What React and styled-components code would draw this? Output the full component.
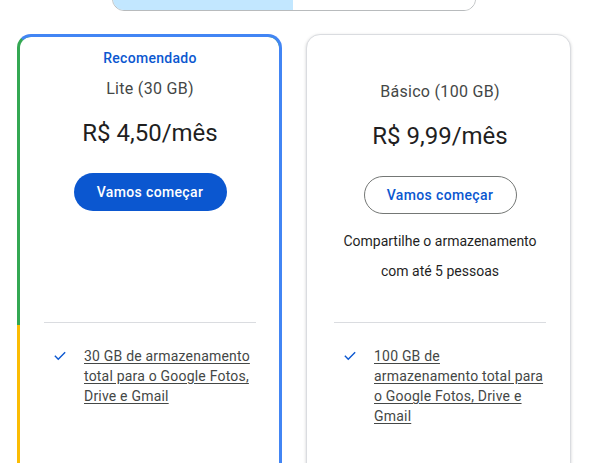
import React from "react";
import styled, { createGlobalStyle } from "styled-components";

const plans = [
  {
    id: "lite",
    recommended: true,
    name: "Lite (30 GB)",
    price: "R$ 4,50/mês",
    feature: "30 GB de armazenamento total para o Google Fotos, Drive e Gmail",
  },
  {
    id: "basic",
    recommended: false,
    name: "Básico (100 GB)",
    price: "R$ 9,99/mês",
    share: ["Compartilhe o armazenamento", "com até 5 pessoas"],
    feature: "100 GB de armazenamento total para o Google Fotos, Drive e Gmail",
  },
];

const Check = () => (
  <svg width="14" height="14" viewBox="0 0 24 24" fill="none">
    <path d="M4 12.5l5 5L20 6.5" stroke="#0b57d0" strokeWidth="2.4" strokeLinecap="square" />
  </svg>
);

const App = () => {
  return (
    <Page>
      <GlobalStyle />
      <Toggle>
        <Segment $active>Mensal</Segment>
        <Segment>
          Anual · Economize até <Save>16%</Save>
        </Segment>
      </Toggle>
      <Cards>
        {plans.map((plan) => (
          <Card key={plan.id} $featured={plan.recommended}>
            <Head $featured={plan.recommended}>
              {plan.recommended && <Badge>Recomendado</Badge>}
              <PlanName>{plan.name}</PlanName>
              <Price>{plan.price}</Price>
              <StartButton $primary={plan.recommended}>Vamos começar</StartButton>
              {plan.share && (
                <Share>
                  {plan.share.map((line) => (
                    <ShareLine key={line}>{line}</ShareLine>
                  ))}
                </Share>
              )}
            </Head>
            <Divider />
            <Feature>
              <CheckWrap>
                <Check />
              </CheckWrap>
              <FeatureText>{plan.feature}</FeatureText>
            </Feature>
          </Card>
        ))}
      </Cards>
    </Page>
  );
};

const GlobalStyle = createGlobalStyle`
  html, body {
    margin: 0;
    background: #ffffff;
    overflow: hidden;
  }
  body {
    font-family: Roboto, "Noto Sans", Arial, sans-serif;
    color: #1f1f1f;
  }
`;

const Page = styled.div`
  width: 589px;
  height: 463px;
  overflow: hidden;
`;

const Toggle = styled.div`
  display: flex;
  width: 364px;
  height: 40px;
  margin: -29px 0 0 112px;
  border: 1px solid #b8bbbd;
  border-radius: 12px;
  overflow: hidden;
  box-sizing: border-box;
`;

const Segment = styled.div`
  flex: ${({ $active }) => ($active ? "0 0 180px" : "1")};
  display: flex;
  align-items: flex-end;
  justify-content: center;
  padding-bottom: ${({ $active }) => ($active ? "16px" : "9px")};
  font-size: 13px;
  color: ${({ $active }) => ($active ? "#0b57d0" : "#444746")};
  background: ${({ $active }) => ($active ? "#c2e7ff" : "#ffffff")};
  line-height: 16px;
  box-sizing: border-box;
`;

const Save = styled.span`
  color: #146c2e;
  margin-left: 4px;
`;

const Cards = styled.div`
  display: grid;
  grid-template-columns: 265px 265px;
  gap: 24px;
  margin: 23px 0 0 17px;
`;

const Card = styled.div`
  height: 460px;
  box-sizing: border-box;
  border-radius: 14px;
  background: #ffffff;
  ${({ $featured }) =>
    $featured
      ? `
    border: 3px solid #4285f4;
    border-left-color: transparent;
    background:
      linear-gradient(#fff, #fff) padding-box,
      linear-gradient(to bottom, #34a853 0, #34a853 291px, #fbbc04 291px) border-box;
    border-top-color: #4285f4;
    padding: 0 23px 0 24px;
  `
      : `
    border: 1px solid #dadce0;
    box-shadow: 0 1px 3px rgba(60, 64, 67, 0.25);
    padding: 0 24px 0 27px;
  `}
`;

const Head = styled.div`
  display: flex;
  flex-direction: column;
  align-items: center;
  height: ${({ $featured }) => ($featured ? "285px" : "287px")};
  padding-top: ${({ $featured }) => ($featured ? "11px" : "45px")};
  box-sizing: border-box;
`;

const Badge = styled.div`
  font-size: 14px;
  line-height: 20px;
  font-weight: 500;
  letter-spacing: 0.3px;
  color: #0b57d0;
  margin-bottom: 9px;
`;

const PlanName = styled.div`
  font-size: 16px;
  line-height: 24px;
  letter-spacing: 0.3px;
  color: #444746;
`;

const Price = styled.div`
  margin-top: 16px;
  font-size: 24px;
  line-height: 32px;
  color: #1f1f1f;
`;

const StartButton = styled.button`
  margin-top: 24px;
  width: 153px;
  height: 38px;
  border-radius: 19px;
  font-family: inherit;
  font-size: 14px;
  font-weight: 500;
  letter-spacing: 0.35px;
  cursor: pointer;
  color: ${({ $primary }) => ($primary ? "#ffffff" : "#0b57d0")};
  background: ${({ $primary }) => ($primary ? "#0b57d0" : "#ffffff")};
  border: ${({ $primary }) => ($primary ? "none" : "1px solid #747775")};
`;

const Share = styled.div`
  margin-top: 12px;
  display: flex;
  flex-direction: column;
  align-items: center;
`;

const ShareLine = styled.div`
  font-size: 14px;
  line-height: 30px;
  color: #1f1f1f;
`;

const Divider = styled.div`
  height: 1px;
  background: #dadce0;
`;

const Feature = styled.div`
  display: flex;
  gap: 17px;
  margin-top: 23px;
  padding-left: 9px;
`;

const CheckWrap = styled.div`
  flex: none;
  width: 14px;
  padding-top: 2px;
`;

const FeatureText = styled.div`
  font-size: 14px;
  line-height: 20px;
  letter-spacing: 0.2px;
  color: #444746;
  text-decoration: underline;
  text-underline-offset: 2px;
`;

export default App;
